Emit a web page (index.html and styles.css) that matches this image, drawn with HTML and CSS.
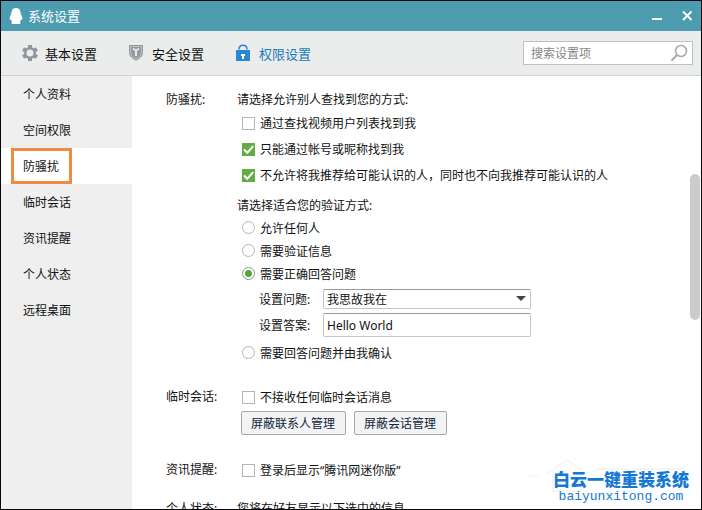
FILE: index.html
```html
<!DOCTYPE html>
<html lang="zh-CN">
<head>
    <meta charset="UTF-8">
    <meta name="viewport" content="width=device-width, initial-scale=1.0">
    <title>系统设置</title>
    <link rel="stylesheet" href="styles.css">
</head>
<body>
    <div class="window">
        <header class="titlebar">
            <svg class="logo" width="14" height="16" viewBox="0 0 14 16">
                <path d="M7 0C4 0 2.500 2 2.500 4.600C2.500 6.300 1 8 .6 10.200C.4 11.700 1 12.200 1.800 11.200C2 12.300 2.500 13.200 3.200 13.800C2 14.300 2 16 4 16H10C12 16 12 14.300 10.800 13.800C11.500 13.200 12 12.300 12.200 11.200C13 12.200 13.600 11.700 13.400 10.200C13 8 11.500 6.300 11.500 4.600C11.500 2 10 0 7 0Z" fill="#fff"/>
            </svg>
            <h1>系统设置</h1>
            <button class="window-button" aria-label="最小化">
                <svg width="12" height="12" viewBox="0 0 12 12"><path d="M1 9H11" stroke="#fff" stroke-width="2"/></svg>
            </button>
            <button class="window-button" aria-label="关闭">
                <svg width="12" height="12" viewBox="0 0 12 12"><path d="M2 1.500L10.500 10M10.500 1.500L2 10" stroke="#fff" stroke-width="2"/></svg>
            </button>
        </header>

        <nav class="toolbar">
            <a class="tab" href="#basic">
                <svg width="16" height="18" viewBox="0 0 16 18">
                    <g fill="#8f979c">
                        <rect x="6" y="1" width="4" height="16"/>
                        <rect x="6" y="1" width="4" height="16" transform="rotate(60 8 9)"/>
                        <rect x="6" y="1" width="4" height="16" transform="rotate(120 8 9)"/>
                        <circle cx="8" cy="9" r="6"/>
                    </g>
                    <circle cx="8" cy="9" r="3.500" fill="#ebeded"/>
                </svg>
                基本设置
            </a>
            <a class="tab" href="#security">
                <svg width="16" height="18" viewBox="1 1 16 18">
                    <path d="M1.500 2.500H14.500V9.500C14.500 13 11.500 15.500 8 17C4.500 15.500 1.500 13 1.500 9.500Z" fill="#959ca1" stroke="#8f979c"/>
                    <path d="M2.500 3.500H13.500V9.500C13.500 12.500 11 14.500 8 15.900C5 14.500 2.500 12.500 2.500 9.500Z" fill="none" stroke="#bcc1c4"/>
                    <path d="M5 5.500L8 7.500L11 5.500M8 7.500V13" fill="none" stroke="#e4e6e8" stroke-width="2"/>
                </svg>
                安全设置
            </a>
            <a class="tab active" href="#permission">
                <svg width="16" height="18" viewBox="1 1 16 18">
                    <path d="M4 6.500C4 0.800 12 0.800 12 6.500" fill="none" stroke="#2b86d3" stroke-width="1.500"/>
                    <rect x="1" y="7" width="14" height="11" fill="#2b86d3"/>
                    <path d="M6 11H10V13H9V16H7V13H6Z" fill="#fff"/>
                </svg>
                权限设置
            </a>
            <div class="search">
                <input type="text" placeholder="搜索设置项" aria-label="搜索设置项">
                <svg width="18" height="18" viewBox="0 0 18 18">
                    <circle cx="11" cy="7" r="5.500" fill="none" stroke="#a9a9a9" stroke-width="1.500"/>
                    <path d="M7 11L1.500 16.500" stroke="#a9a9a9" stroke-width="2"/>
                </svg>
            </div>
        </nav>

        <div class="body">
            <nav class="sidebar">
                <a href="#profile">个人资料</a>
                <a href="#space">空间权限</a>
                <a class="selected" href="#disturb"><span>防骚扰</span></a>
                <a href="#temp">临时会话</a>
                <a href="#news">资讯提醒</a>
                <a href="#status">个人状态</a>
                <a href="#remote">远程桌面</a>
            </nav>

            <main class="content">
                <section class="group" id="disturb">
                    <h2>防骚扰:</h2>
                    <div>
                        <p>请选择允许别人查找到您的方式:</p>
                        <label class="check"><input type="checkbox">通过查找视频用户列表找到我</label>
                        <label class="check"><input type="checkbox" checked>只能通过帐号或昵称找到我</label>
                        <label class="check"><input type="checkbox" checked>不允许将我推荐给可能认识的人，同时也不向我推荐可能认识的人</label>
                        <p class="subtitle">请选择适合您的验证方式:</p>
                        <label class="radio"><input type="radio" name="verify">允许任何人</label>
                        <label class="radio"><input type="radio" name="verify">需要验证信息</label>
                        <label class="radio"><input type="radio" name="verify" checked>需要正确回答问题</label>
                        <div class="question">
                            <label for="question">设置问题:</label>
                            <div class="select">
                                <select id="question">
                                    <option>我思故我在</option>
                                </select>
                            </div>
                            <label for="answer">设置答案:</label>
                            <input type="text" id="answer" value="Hello World">
                        </div>
                        <label class="radio"><input type="radio" name="verify">需要回答问题并由我确认</label>
                    </div>
                </section>

                <section class="group" id="temp">
                    <h2>临时会话:</h2>
                    <div>
                        <label class="check"><input type="checkbox">不接收任何临时会话消息</label>
                        <div class="buttons">
                            <button>屏蔽联系人管理</button>
                            <button>屏蔽会话管理</button>
                        </div>
                    </div>
                </section>

                <section class="group" id="news">
                    <h2>资讯提醒:</h2>
                    <div>
                        <label class="check"><input type="checkbox">登录后显示“腾讯网迷你版”</label>
                    </div>
                </section>

                <section class="group last" id="status">
                    <h2>个人状态:</h2>
                    <p>您将在好友显示以下选中的信息</p>
                </section>
            </main>

            <div class="scrollbar"></div>
        </div>

        <div class="watermark">
            <svg class="house" width="164" height="36" viewBox="0 0 164 36">
                <path d="M2 19H14M22 17L42 3L62 17M28 17V34H56V17M70 12H160" fill="none" stroke="#f6f6f6" stroke-width="2"/>
            </svg>
            <strong>白云一键重装系统</strong>
            <span>baiyunxitong.com</span>
        </div>
    </div>
</body>
</html>
```
FILE: styles.css
```css
* {
    box-sizing: border-box;
}

body {
    margin: 0;
    font-family: "Noto Sans", "Noto Sans CJK SC", sans-serif;
    font-size: 12px;
    color: #111;
}

h1, h2, p {
    margin: 0;
    font-size: 12px;
    font-weight: normal;
}

a {
    color: inherit;
    text-decoration: none;
}

input, select, button {
    margin: 0;
    font-family: inherit;
    font-size: 12px;
    color: inherit;
}

.window {
    position: relative;
    display: flex;
    flex-direction: column;
    height: 100vh;
    border: 1px solid #05080d;
    background-color: #fff;
    overflow: hidden;
}

/* title bar */
.titlebar {
    display: flex;
    flex: none;
    align-items: center;
    height: 30px;
    padding: 0 8px;
    background-color: #4d9bae;
    color: #fff;
}

.titlebar h1 {
    flex: 1;
    margin-left: 5px;
    font-size: 13px;
    line-height: 28px;
}

.window-button {
    display: flex;
    margin-left: 18px;
    padding: 0;
    border: none;
    background: none;
    cursor: pointer;
}

/* toolbar */
.toolbar {
    display: flex;
    flex: none;
    align-items: center;
    height: 45px;
    padding: 0 8px 0 21px;
    border-bottom: 1px solid #d2d2d2;
    background-color: #ebeded;
}

.tab {
    display: flex;
    align-items: center;
    gap: 7px;
    margin-right: 32px;
    font-size: 13px;
}

.tab.active {
    color: #1a79ba;
}

.search {
    display: flex;
    align-items: center;
    width: 170px;
    height: 24px;
    margin-left: auto;
    padding: 0 4px 0 7px;
    border: 1px solid #bfbfbf;
    background-color: #fff;
}

.search input {
    flex: 1;
    min-width: 0;
    padding: 0;
    border: none;
    outline: none;
}

.search input::placeholder {
    color: #858585;
}

.body {
    display: flex;
    flex: 1;
    min-height: 0;
}

/* left menu */
.sidebar {
    flex: none;
    width: 131px;
    background-color: #efefef;
}

.sidebar a {
    display: block;
    height: 36px;
    padding-left: 22px;
    line-height: 38px;
}

.sidebar .selected {
    padding-left: 10px;
    background-color: #fff;
}

.selected span {
    display: inline-block;
    height: 36px;
    padding: 0 10px 0 9px;
    border: 3px solid #ee8b42;
    line-height: 32px;
}

/* settings */
.content {
    flex: 1;
    padding: 14px 0 0 34px;
    overflow: hidden;
}

.group {
    display: grid;
    grid-template-columns: 71px 1fr;
    margin-bottom: 20px;
}

.group p, #disturb h2 {
    line-height: 20px;
}

.group h2 {
    line-height: 26px;
}

.group .subtitle {
    margin-top: 8px;
}

#news {
    margin-bottom: 16px;
}

.group.last h2 {
    line-height: 20px;
}

.check, .radio {
    display: flex;
    align-items: center;
    gap: 5px;
    height: 26px;
    padding-left: 5px;
}

.radio {
    height: 23px;
}

.check input, .radio input {
    appearance: none;
    width: 13px;
    height: 13px;
    border: 1px solid #b5b5b5;
    background-color: #fff;
}

.radio input {
    border-radius: 50%;
}

.check input:checked {
    border-color: #62ab45;
    background: #62ab45 url("data:image/svg+xml,%3Csvg xmlns='http://www.w3.org/2000/svg' viewBox='0 0 11 11'%3E%3Cpath d='M1 5.500L4.300 8.700L10.200 2.200' fill='none' stroke='%23fff' stroke-width='2'/%3E%3C/svg%3E");
}

.radio input:checked {
    border-color: #8a9a85;
    background: radial-gradient(circle, #56a336 3px, #fff 4px);
}

.question {
    display: grid;
    grid-template-columns: 64px 208px;
    row-gap: 4px;
    align-items: center;
    margin: 4px 0 4px 22px;
}

.select {
    position: relative;
}

.select::after {
    content: "";
    position: absolute;
    top: 7px;
    right: 5px;
    border: 5px solid transparent;
    border-top-color: #444;
    border-bottom: none;
    pointer-events: none;
}

.question select, .question input {
    display: block;
    appearance: none;
    width: 100%;
    height: 24px;
    padding: 0 3px;
    border: 1px solid #c4c4c4;
    border-top-color: #999;
    border-radius: 2px;
    background-color: #fff;
}

.question select {
    height: 20px;
}

.buttons {
    display: flex;
    gap: 8px;
    padding: 1px 0 2px 4px;
}

.buttons button {
    height: 24px;
    padding: 0 10px 1px 9px;
    border: 1px solid #a5a8ab;
    border-radius: 2px;
    background-color: #f2f3f4;
    color: #12263a;
    white-space: nowrap;
}

.scrollbar {
    flex: none;
    width: 10px;
    height: 146px;
    margin: 98px 1px 0 0;
    border-radius: 5px;
    background-color: #cbcbcb;
}

/* site mark over the corner */
.watermark {
    position: absolute;
    right: 12px;
    bottom: 4px;
    z-index: 0;
    display: flex;
    flex-direction: column;
    align-items: center;
    color: #1478d4;
}

.watermark strong {
    font-family: "Noto Sans CJK SC", sans-serif;
    font-size: 17px;
    font-weight: 900;
    line-height: 20px;
}

.watermark span {
    font-family: "Liberation Mono", monospace;
    font-size: 13px;
    line-height: 16px;
}

.house {
    position: absolute;
    right: 0;
    bottom: 12px;
    z-index: -1;
}
```
